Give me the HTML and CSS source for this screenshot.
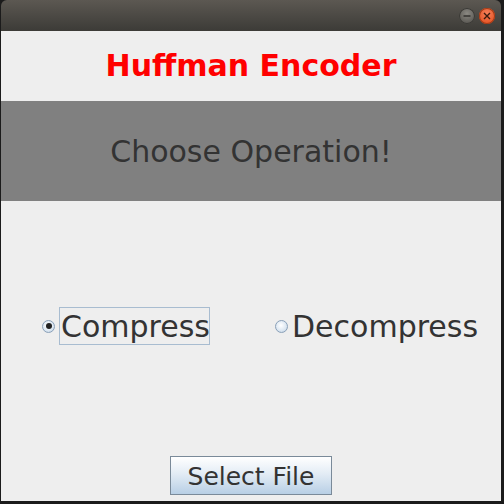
FILE: index.html
```html
<!DOCTYPE html>
<html>
<head>
<meta charset="utf-8">
<link rel="stylesheet" href="styles.css">
</head>
<body>
<div class="window">
  <div class="titlebar">
    <span class="wbtn wbtn-min"><svg width="16" height="16" viewBox="0 0 16 16"><line x1="4.5" y1="8" x2="11.5" y2="8" stroke="#2e2d2a" stroke-width="1.4"/></svg></span>
    <span class="wbtn wbtn-close"><svg width="16" height="16" viewBox="0 0 16 16"><path d="M5 5 L11 11 M11 5 L5 11" stroke="#3a1a0c" stroke-width="1.4"/></svg></span>
  </div>
  <div class="content">
    <div class="header">Huffman Encoder</div>
    <div class="band">Choose Operation!</div>
    <div class="options">
      <label class="opt">
        <span class="radio selected"></span>
        <span class="opt-label focused">Compress</span>
      </label>
      <label class="opt opt-second">
        <span class="radio"></span>
        <span class="opt-label">Decompress</span>
      </label>
    </div>
    <div class="actions">
      <button class="btn">Select File</button>
    </div>
  </div>
</div>
</body>
</html>
```
FILE: styles.css
```css
html, body {
  margin: 0;
  padding: 0;
  background: #1b1b1b;
  width: 504px;
  height: 504px;
  overflow: hidden;
}
.window {
  width: 500px;
  height: 501px;
  margin-left: 1px;
  display: flex;
  flex-direction: column;
  font-family: "DejaVu Sans", sans-serif;
}
.titlebar {
  height: 31px;
  flex: none;
  border-radius: 6px 6px 0 0;
  background: linear-gradient(#5c5852, #3c3b37);
  display: flex;
  justify-content: flex-end;
  align-items: center;
  gap: 4px;
  padding-right: 6px;
  box-sizing: border-box;
}
.wbtn {
  width: 16px;
  height: 16px;
  border-radius: 50%;
  display: flex;
  margin-top: 1px;
}
.wbtn-min {
  background: radial-gradient(circle at 50% 35%, #8a8882, #5e5c57 70%, #4a4945);
  box-shadow: inset 0 0 0 1px #3a3935;
}
.wbtn-close {
  background: radial-gradient(circle at 50% 35%, #f5805a, #e85a2c 65%, #c8461c);
  box-shadow: inset 0 0 0 1px #a33a16;
}
.content {
  flex: 1;
  background: #eeeeee;
  display: flex;
  flex-direction: column;
}
.header {
  height: 70px;
  display: flex;
  align-items: center;
  justify-content: center;
  color: #ff0000;
  font-weight: bold;
  font-size: 30px;
  padding-bottom: 1px;
  box-sizing: border-box;
}
.band {
  height: 100px;
  background: #808080;
  color: #333333;
  font-size: 30px;
  display: flex;
  align-items: center;
  justify-content: center;
}
.options {
  margin-top: 106px;
  height: 38px;
  display: flex;
  align-items: center;
  padding-left: 41px;
}
.opt {
  display: flex;
  align-items: center;
  gap: 4px;
}
.opt-second {
  margin-left: 65px;
  gap: 2px;
}
.radio {
  width: 13px;
  height: 13px;
  box-sizing: border-box;
  border-radius: 50%;
  border: 1px solid #8aa0b8;
  background: radial-gradient(circle at 45% 40%, #ffffff, #dbe6f1 60%, #b7c9dc);
  display: flex;
  align-items: center;
  justify-content: center;
}
.radio.selected::after {
  content: "";
  width: 6px;
  height: 6px;
  border-radius: 50%;
  background: #222222;
}
.opt-label {
  height: 38px;
  box-sizing: border-box;
  border: 1px solid transparent;
  padding: 0 1px 0 1px;
  font-size: 30px;
  color: #333333;
  display: flex;
  align-items: center;
}
.opt-label.focused {
  border-color: #a8bcd0;
  width: 151px;
}
.actions {
  margin-top: 111px;
  display: flex;
  justify-content: center;
}
.btn {
  width: 162px;
  height: 39px;
  margin: 0;
  padding: 1px 0 0 0;
  border: 1px solid #7a8a99;
  border-radius: 0;
  background: linear-gradient(#ffffff, #e3ecf5 45%, #b8cfe5);
  font-family: "DejaVu Sans", sans-serif;
  font-size: 25px;
  color: #333333;
}
```
